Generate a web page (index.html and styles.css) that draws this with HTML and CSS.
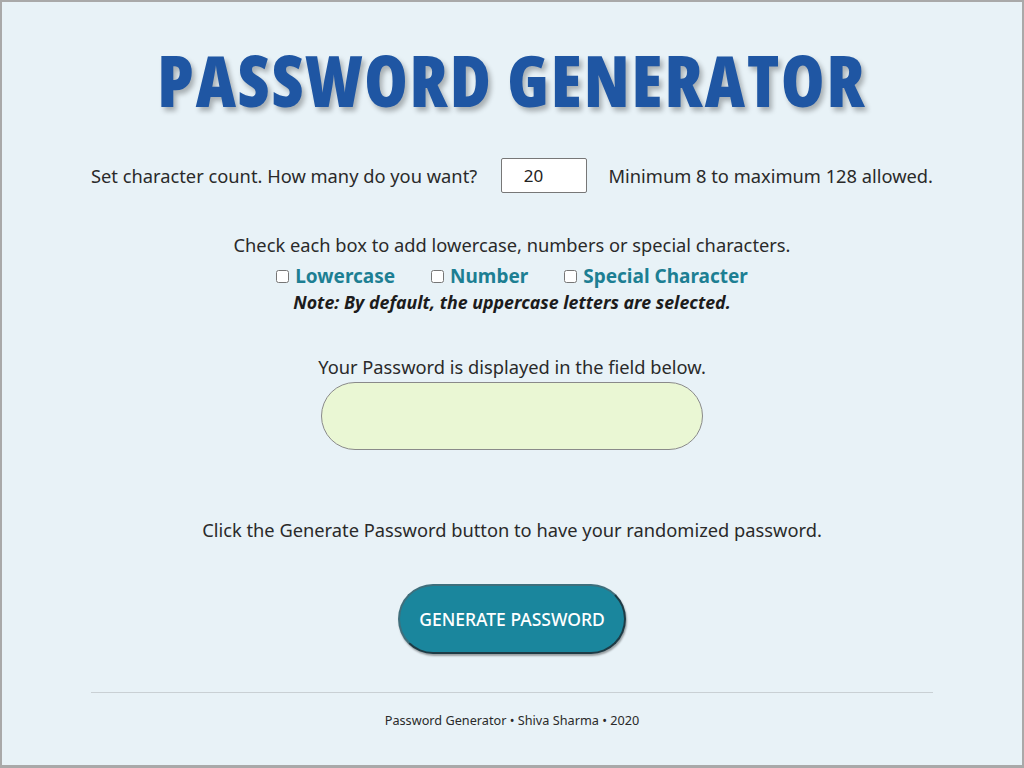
FILE: index.html
```html
<!DOCTYPE html>
<html lang="en">
<head>
<meta charset="utf-8">
<title>Password Generator</title>
<link rel="stylesheet" href="styles.css">
</head>
<body>
<div class="page">
  <main class="wrap">
    <h1 class="title">PASSWORD GENERATOR</h1>
    <div class="count-row">
      <label for="count">Set character count. How many do you want?</label>
      <input id="count" class="count" type="text" value="20">
      <span>Minimum 8 to maximum 128 allowed.</span>
    </div>
    <section class="options">
      <p class="line">Check each box to add lowercase, numbers or special characters.</p>
      <div class="checks">
        <label class="check"><input type="checkbox">Lowercase</label>
        <label class="check"><input type="checkbox">Number</label>
        <label class="check"><input type="checkbox">Special Character</label>
      </div>
      <p class="note">Note: By default, the uppercase letters are selected.</p>
    </section>
    <section class="output">
      <p class="line">Your Password is displayed in the field below.</p>
      <textarea class="result" readonly></textarea>
    </section>
    <p class="line click">Click the Generate Password button to have your randomized password.</p>
    <div class="btn-row">
      <button class="gen" type="button">GENERATE PASSWORD</button>
    </div>
    <hr class="rule">
    <footer class="foot">Password Generator • Shiva Sharma • 2020</footer>
  </main>
</div>
</body>
</html>
```

FILE: styles.css
```css
html, body {
  margin: 0;
  padding: 0;
  height: 100%;
}
body {
  background: #e8f2f7;
  font-family: "Noto Sans", "Open Sans", sans-serif;
  color: #2a2a2a;
}
.page {
  box-sizing: border-box;
  height: 768px;
  border: 2px solid #a9a9a9;
  border-bottom-width: 3px;
  background: #e8f2f7;
}
.wrap {
  width: 842px;
  margin: 0 auto;
  display: flex;
  flex-direction: column;
  align-items: center;
}
.title {
  margin: 36px 0 0;
  font-family: "Open Sans", sans-serif;
  font-weight: 800;
  font-stretch: 75%;
  font-size: 70px;
  line-height: 84px;
  letter-spacing: 2px;
  color: #1f56a3;
  text-shadow: 3px 4px 5px rgba(0,0,0,0.28);
}
.count-row {
  margin-top: 36px;
  display: flex;
  align-items: center;
  font-size: 18.3px;
  width: 100%;
  justify-content: space-between;
}
.count {
  box-sizing: border-box;
  width: 86px;
  height: 35px;
  border: 1px solid #777;
  border-radius: 2px;
  background: #fff;
  font-family: inherit;
  font-size: 17px;
  padding: 0 0 0 22px;
  color: #222;
  margin: 0 8px 0 10px;
}
.options {
  margin-top: 40px;
  display: flex;
  flex-direction: column;
  align-items: center;
}
.line {
  margin: 0;
  font-size: 18.3px;
  line-height: 24px;
}
.checks {
  display: flex;
  gap: 36px;
  margin-top: 6px;
}
.check {
  display: flex;
  align-items: center;
  font-weight: 700;
  font-size: 19px;
  color: #1d7f93;
  line-height: 26px;
}
.check input {
  margin: 0 6px 0 0;
  width: 13px;
  height: 13px;
}
.note {
  margin: 2px 0 0;
  font-weight: 700;
  font-style: italic;
  font-size: 17.8px;
  line-height: 22px;
  color: #1c1c1c;
}
.output {
  margin-top: 42px;
  display: flex;
  flex-direction: column;
  align-items: center;
}
.result {
  box-sizing: border-box;
  margin-top: 3px;
  width: 382px;
  height: 68px;
  border: 1px solid #8a8a8a;
  border-radius: 34px;
  background: #eaf7d4;
  resize: none;
  outline: none;
}
.click {
  margin-top: 68px;
}
.btn-row {
  margin-top: 42px;
}
.gen {
  box-sizing: border-box;
  width: 228px;
  height: 70px;
  border-radius: 35px;
  border: 2px solid #1e3b45;
  border-top-color: #3f6f7c;
  border-left-color: #3f6f7c;
  background: #1a869d;
  color: #fff;
  font-family: "Noto Sans", sans-serif;
  font-weight: 500;
  font-size: 17.5px;
  letter-spacing: 0;
  box-shadow: 1px 2px 2px rgba(0,0,0,0.35);
}
.rule {
  width: 100%;
  margin: 38px 0 0;
  border: 0;
  border-top: 1px solid #c9d0d4;
}
.foot {
  margin-top: 18px;
  font-size: 12.7px;
  color: #2a2a2a;
}
```
